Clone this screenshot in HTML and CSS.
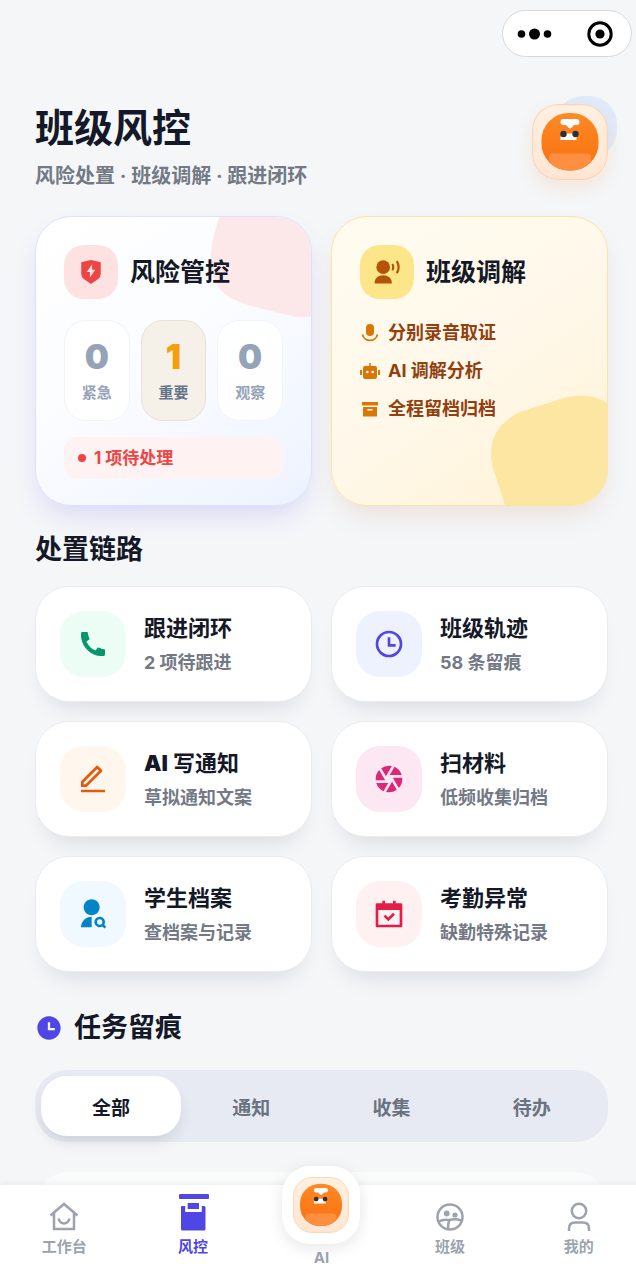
FILE: index.html
```html
<!DOCTYPE html>
<html lang="zh-CN">
<head>
  <meta charset="UTF-8">
  <meta name="viewport" content="width=device-width, initial-scale=1">
  <title>班级风控</title>
  <link rel="stylesheet" href="styles.css">
</head>
<body>
  <svg class="defs" aria-hidden="true">
    <defs>
      <linearGradient id="frame" x1="0" y1="0" x2="0" y2="1">
        <stop offset="0" stop-color="#fff0e2"/>
        <stop offset="1" stop-color="#ffe6d2"/>
      </linearGradient>
      <linearGradient id="ball" x1="0" y1="0" x2="0" y2="1">
        <stop offset="0" stop-color="#fd8a25"/>
        <stop offset="1" stop-color="#f97010"/>
      </linearGradient>
    </defs>
    <symbol id="mascot" viewBox="0 0 76 76">
      <rect x=".7" y=".7" width="74.6" height="74.6" rx="25" fill="url(#frame)" stroke="#fdd3b0" stroke-width="1.2"/>
      <rect x="9.5" y="9" width="57" height="57.5" rx="27" fill="url(#ball)"/>
      <path d="M17 53q0-3.500 5-3.500h32q5 0 5 3.500v4q-8 9.500-20 9.500h-2q-12 0-20-9.500z" fill="#ff8f40"/>
      <path d="M31.500 15h13a3 3 0 0 1 0 6h-2.500l-3 3.200h-2l-3-3.200h-2.500a3 3 0 0 1 0-6z" fill="#fff"/>
      <path d="M32 29.500h12.500v6.500h-16v-3z" fill="#fff"/>
      <circle cx="31.500" cy="30" r="3.200" fill="#2b303b"/>
      <circle cx="43.500" cy="30" r="3.200" fill="#2b303b"/>
    </symbol>
  </svg>

  <div class="app">
    <div class="capsule">
      <button class="capsule-btn" aria-label="更多">
        <svg width="36" height="14" viewBox="0 0 36 14"><circle cx="4.500" cy="7" r="3.800"/><circle cx="17.500" cy="7" r="5.500"/><circle cx="30.500" cy="7" r="3.800"/></svg>
      </button>
      <button class="capsule-btn" aria-label="关闭">
        <svg width="26" height="26" viewBox="0 0 26 26"><circle cx="13" cy="13" r="11.200" fill="none" stroke="#000" stroke-width="3"/><circle cx="13" cy="13" r="4.600"/></svg>
      </button>
    </div>

    <main class="content">
      <header class="header">
        <div>
          <h1>班级风控</h1>
          <p class="subtitle">风险处置 · 班级调解 · 跟进闭环</p>
        </div>
        <div class="avatar">
          <svg class="avatar-img"><use href="#mascot"/></svg>
        </div>
      </header>

      <section class="grid">
        <article class="card card-risk">
          <svg class="blob blob-top" width="101" height="101" viewBox="0 0 101 101"><path d="M9 0L3 22C-1 40-1 57 9 71C16 81 30 86 49 91L78 98Q94 102 101 99V0z" fill="#fde8e9"/></svg>
          <div class="card-head">
            <span class="badge badge-red">
              <svg class="icon-md" viewBox="0 0 24 24"><path d="M3.783 2.826L12 1l8.217 1.826a1 1 0 0 1 .783.976v9.987a6 6 0 0 1-2.672 4.992L12 23l-6.328-4.219A6 6 0 0 1 3 13.790V3.802a1 1 0 0 1 .783-.976zM13 10V5l-5 7h3v5l5-7h-3z"/></svg>
            </span>
            <h2>风险管控</h2>
          </div>
          <div class="stats">
            <div class="stat"><b>0</b><span>紧急</span></div>
            <div class="stat stat-on"><b>1</b><span>重要</span></div>
            <div class="stat"><b>0</b><span>观察</span></div>
          </div>
          <p class="alert">1 项待处理</p>
        </article>

        <article class="card card-talk">
          <svg class="blob blob-bottom" width="117" height="110" viewBox="0 0 117 110"><path d="M15 110L3 73C-3 50 4 30 30 17L77 2Q100-3 117 8V110z" fill="#fce6a2"/></svg>
          <div class="card-head">
            <span class="badge badge-yellow">
              <svg class="icon-md" viewBox="0 0 24 24"><circle cx="8.500" cy="7.500" r="6.300"/><path d="M.5 22.500c0-5 3.500-7.500 8-7.500s8 2.500 8 7.500z"/><path d="M17 4.500q1.500 3 0 6M21 2q3.500 5.500 0 11" fill="none" stroke="currentColor" stroke-width="2"/></svg>
            </span>
            <h2>班级调解</h2>
          </div>
          <ul class="points">
            <li><svg class="icon-sm" viewBox="0 0 20 20"><rect x="6" y="1" width="8" height="12" rx="4"/><path d="M2.500 11.500a7.700 7.700 0 0 0 15 0" fill="none" stroke="currentColor" stroke-width="1.800"/></svg>分别录音取证</li>
            <li><svg class="icon-sm" viewBox="0 0 20 20"><path d="M9.200 2h1.600v3H15a2 2 0 0 1 2 2v9a2 2 0 0 1-2 2H5a2 2 0 0 1-2-2V7a2 2 0 0 1 2-2h4.200zM0 9h2v5H0zM18 9h2v5h-2z"/><circle cx="7.300" cy="11" r="1.300" fill="#fff8e8"/><circle cx="12.700" cy="11" r="1.300" fill="#fff8e8"/></svg>AI 调解分析</li>
            <li><svg class="icon-sm" viewBox="0 0 20 20"><path d="M2 3h16v3.500H2zM3 8h14v9.500H3z"/><path d="M7.500 10h5v1.600h-5z" fill="#fff8e8"/></svg>全程留档归档</li>
          </ul>
        </article>
      </section>

      <h2 class="section-title">处置链路</h2>
      <nav class="grid">
        <a class="tile" href="#follow">
          <span class="tile-icon green"><svg viewBox="0 0 24 24"><path d="M21 16.420v3.536a1 1 0 0 1-.93.998c-.437.03-.794.046-1.070.046-8.837 0-16-7.163-16-16 0-.276.015-.633.046-1.070A1 1 0 0 1 4.044 3H7.580a.5.5 0 0 1 .498.450c.023.230.044.413.064.552A13.901 13.901 0 0 0 9.350 8.003c.095.2.033.439-.147.567l-2.158 1.542a13.047 13.047 0 0 0 6.844 6.844l1.540-2.154a.462.462 0 0 1 .573-.149 13.901 13.901 0 0 0 4 1.205c.139.02.322.042.550.064a.5.5 0 0 1 .449.498z"/></svg></span>
          <span class="tile-text"><strong>跟进闭环</strong><small>2 项待跟进</small></span>
        </a>
        <a class="tile" href="#track">
          <span class="tile-icon indigo"><svg viewBox="0 0 24 24"><circle cx="12" cy="12" r="9" fill="none" stroke="currentColor" stroke-width="2"/><path d="M13 12h4v2h-6V7h2z"/></svg></span>
          <span class="tile-text"><strong>班级轨迹</strong><small>58 条留痕</small></span>
        </a>
        <a class="tile" href="#notice">
          <span class="tile-icon orange"><svg viewBox="0 0 24 24"><path d="M6.414 16L16.556 5.858l-1.414-1.414L5 14.586V16h1.414zm.829 2H3v-4.243L14.435 2.322a1 1 0 0 1 1.414 0l2.829 2.829a1 1 0 0 1 0 1.414L7.243 18zM3 20h18v2H3v-2z"/></svg></span>
          <span class="tile-text"><strong><span class="heavy">AI</span> 写通知</strong><small>草拟通知文案</small></span>
        </a>
        <a class="tile" href="#scan">
          <span class="tile-icon pink"><svg viewBox="0 0 24 24"><path d="M9.827 21.763L14.310 14l3.532 6.117A9.955 9.955 0 0 1 12 22c-.746 0-1.473-.082-2.173-.237zM7.890 21.120A10.028 10.028 0 0 1 2.458 15h8.965L7.890 21.119zM2.050 13a9.964 9.964 0 0 1 2.583-7.761L9.112 13H2.050zm4.109-9.117A9.955 9.955 0 0 1 12 2c.746 0 1.473.082 2.173.237L9.690 10 6.159 3.883zM16.110 2.880A10.028 10.028 0 0 1 21.542 9h-8.965l3.533-6.119zM21.950 11a9.964 9.964 0 0 1-2.583 7.761L14.888 11h7.064z"/></svg></span>
          <span class="tile-text"><strong>扫材料</strong><small>低频收集归档</small></span>
        </a>
        <a class="tile" href="#student">
          <span class="tile-icon blue"><svg viewBox="0 0 24 24"><path d="M11 14v8H3a8 8 0 0 1 8-8zm0-1c-3.315 0-6-2.685-6-6s2.685-6 6-6 6 2.685 6 6-2.685 6-6 6zm9.446 7.032l1.504 1.503-1.415 1.415-1.503-1.504a4 4 0 1 1 1.414-1.414zM17 20a2 2 0 1 0 0-4 2 2 0 0 0 0 4z"/></svg></span>
          <span class="tile-text"><strong>学生档案</strong><small>查档案与记录</small></span>
        </a>
        <a class="tile" href="#attendance">
          <span class="tile-icon rose"><svg viewBox="0 0 24 24"><path d="M9 2v2h6V2h2v2h4a1 1 0 0 1 1 1v16a1 1 0 0 1-1 1H3a1 1 0 0 1-1-1V5a1 1 0 0 1 1-1h4V2h2zm11 7H4v11h16V9zm-4.964 2.136l1.414 1.414L11.500 17.500l-3.536-3.536 1.415-1.414 2.120 2.122z"/></svg></span>
          <span class="tile-text"><strong>考勤异常</strong><small>缺勤特殊记录</small></span>
        </a>
      </nav>

      <h2 class="section-title section-tasks">
        <svg class="icon-title" viewBox="0 0 24 24"><path d="M12 22C6.477 22 2 17.523 2 12S6.477 2 12 2s10 4.477 10 10-4.477 10-10 10zm1-10V7h-2v7h6v-2h-4z"/></svg>
        任务留痕
      </h2>
      <div class="tabs" role="tablist">
        <button class="tab tab-on" role="tab" aria-selected="true">全部</button>
        <button class="tab" role="tab">通知</button>
        <button class="tab" role="tab">收集</button>
        <button class="tab" role="tab">待办</button>
      </div>
      <div class="task"></div>
    </main>

    <nav class="tabbar">
      <a class="nav-item" href="#home">
        <svg viewBox="0 0 32 32"><path d="M2.500 14.500L16 3l13.500 11.500M6 12.500V28h20V12.500M10.500 17.500q1.500 5 5.500 5t5.500-5"/></svg>
        <span>工作台</span>
      </a>
      <a class="nav-item nav-on" href="#risk">
        <svg viewBox="0 0 32 32"><rect x="2" y="-7" width="30" height="5" rx="1"/><path d="M5 5h3.200v6h16.600V5H27a1.500 1.500 0 0 1 1.500 1.500V28a1.500 1.500 0 0 1-1.500 1.500H5.500A1.500 1.500 0 0 1 4 28V6a1 1 0 0 1 1-1z"/><path d="M10.700 2h11.300v6H10.700z"/></svg>
        <span>风控</span>
      </a>
      <a class="nav-item nav-ai" href="#ai">
        <span class="bubble"><svg><use href="#mascot"/></svg></span>
        <span>AI</span>
      </a>
      <a class="nav-item" href="#class">
        <svg viewBox="0 0 32 32"><circle cx="16" cy="16" r="12.500"/><circle cx="12.700" cy="12.500" r="2.900" class="dot"/><circle cx="21" cy="14" r="2.600" class="dot"/><path d="M4.500 20.500q5-2.500 10.500-1.500 7-1.500 12 .5M15.500 19q-1.500 3-1.500 9"/></svg>
        <span>班级</span>
      </a>
      <a class="nav-item" href="#me">
        <svg viewBox="0 0 32 32"><circle cx="16" cy="10" r="7.200"/><path d="M6 30v-2.500q0-6 6-6h8q6 0 6 6V30"/></svg>
        <span>我的</span>
      </a>
    </nav>
  </div>
</body>
</html>
```

FILE: styles.css
```css
* {
  box-sizing: border-box;
}
body {
  margin: 0;
  font-family: Inter, "Noto Sans CJK SC", sans-serif;
  font-weight: 700;
  color: #141827;
  background: #f4f6f8;
}
h1, h2, p, ul {
  margin: 0;
  padding: 0;
}
a {
  color: inherit;
  text-decoration: none;
}
button {
  border: 0;
  padding: 0;
  background: none;
  font: inherit;
  color: inherit;
}
svg {
  display: block;
  fill: currentColor;
}
.defs {
  position: absolute;
  width: 0;
  height: 0;
}
.app {
  height: 100vh;
  display: flex;
  flex-direction: column;
  overflow: hidden;
}
.content {
  flex: 1;
  min-height: 0;
  overflow-y: auto;
  scrollbar-width: none;
  padding: 104px 28px 0 35px;
}

/* top right capsule, floats over the page */
.capsule {
  position: fixed;
  z-index: 5;
  top: 10px;
  right: 4px;
  width: 130px;
  height: 47px;
  padding: 0 18px 0 14px;
  display: flex;
  justify-content: space-between;
  border: 1px solid #d6d8da;
  border-radius: 24px;
  background: #fff;
  color: #000;
}
.capsule-btn {
  display: flex;
  align-items: center;
}

/* header */
.header {
  display: flex;
  justify-content: space-between;
  margin-bottom: 26px;
}
h1 {
  font-size: 39px;
  line-height: 48px;
}
.subtitle {
  margin-top: 10px;
  font-size: 20px;
  line-height: 28px;
  color: #737985;
}
.avatar {
  position: relative;
  width: 76px;
  height: 76px;
}
.avatar::before {
  content: "";
  position: absolute;
  top: -8px;
  right: -9px;
  width: 62px;
  height: 62px;
  border-radius: 28px;
  background: #e0eafa;
}
.avatar-img {
  position: relative;
  width: 76px;
  height: 76px;
  border-radius: 26px;
  box-shadow: 0 8px 18px rgba(249, 115, 22, 0.12);
}

/* cards */
.grid {
  display: grid;
  grid-template-columns: 1fr 1fr;
  gap: 19px;
}
.card {
  position: relative;
  overflow: hidden;
  padding: 28px 28px 26px;
  border-radius: 36px;
}
.card-risk {
  border: 1px solid #dfe0fd;
  background: linear-gradient(145deg, #fff 0%, #fbfcff 45%, #edf3ff 100%);
  box-shadow: 0 14px 28px -8px rgba(99, 91, 240, 0.22);
}
.card-talk {
  border: 1px solid #fde3a6;
  background: linear-gradient(145deg, #fffcef 0%, #fff8ea 50%, #fff3d6 100%);
  box-shadow: 0 14px 28px -8px rgba(190, 110, 60, 0.18);
}
.blob {
  position: absolute;
}
.blob-top {
  top: 0;
  right: 0;
}
.blob-bottom {
  right: 0;
  bottom: 0;
}
.card-head {
  position: relative;
  display: flex;
  align-items: center;
  gap: 12px;
  margin-bottom: 21px;
}
.card-head h2 {
  font-size: 25px;
  line-height: 36px;
}
.badge {
  width: 54px;
  height: 54px;
  border-radius: 20px;
  display: flex;
  align-items: center;
  justify-content: center;
}
.badge-red {
  color: #ef4444;
  background: #fee2e2;
}
.badge-yellow {
  color: #b45309;
  background: #fde68a;
}
.icon-md {
  width: 26px;
  height: 26px;
}
.icon-sm {
  width: 20px;
  height: 20px;
  color: #d97706;
}
.stats {
  position: relative;
  display: grid;
  grid-template-columns: repeat(3, 1fr);
  gap: 11px;
}
.stat {
  height: 101px;
  padding-top: 16px;
  border: 1px solid #f1f3f8;
  border-radius: 22px;
  background: rgba(255, 255, 255, 0.85);
  text-align: center;
  color: #94a3b8;
}
.stat b {
  display: block;
  font-size: 34px;
  line-height: 40px;
  font-weight: 900;
}
.stat span {
  display: block;
  margin-top: 5px;
  font-size: 15px;
  line-height: 22px;
}
.stat-on {
  border-color: #e9e1d4;
  background: #f6f1e8;
  color: #64748b;
}
.stat-on b {
  color: #f59e0b;
}
.alert {
  display: flex;
  align-items: center;
  gap: 8px;
  margin-top: 16px;
  padding: 8px 14px;
  border-radius: 14px;
  background: #fef2f2;
  color: #ef4444;
  font-size: 17px;
  line-height: 26px;
}
.alert::before {
  content: "";
  width: 8px;
  height: 8px;
  border-radius: 50%;
  background: #ef4444;
}
.points {
  position: relative;
  display: grid;
  gap: 12px;
  list-style: none;
  font-size: 18px;
  line-height: 26px;
  color: #92400e;
}
.points li {
  display: flex;
  align-items: center;
  gap: 8px;
}

/* entry tiles */
.section-title {
  margin: 26px 0 18px;
  font-size: 27px;
  line-height: 36px;
}
.tile {
  display: flex;
  align-items: center;
  gap: 18px;
  padding: 24px;
  border: 1px solid #e9ebee;
  border-radius: 34px;
  background: #fff;
  box-shadow: 0 16px 24px -12px rgba(15, 23, 42, 0.12);
}
.tile-icon {
  flex: none;
  width: 66px;
  height: 66px;
  border-radius: 24px;
  display: flex;
  align-items: center;
  justify-content: center;
}
.tile-icon svg {
  width: 32px;
  height: 32px;
}
.tile-text strong {
  display: block;
  font-size: 22px;
  line-height: 34px;
  font-weight: 700;
}
.tile-text small {
  display: block;
  margin-top: 4px;
  font-size: 18px;
  line-height: 28px;
  color: #737985;
}
.tile-text .heavy {
  font-weight: 900;
}
.green { color: #059669; background: #ecfdf5; }
.indigo { color: #4f46e5; background: #eef2ff; }
.orange { color: #ea580c; background: #fff7ed; }
.pink { color: #db2777; background: #fce7f3; }
.blue { color: #0284c7; background: #f0f9ff; }
.rose { color: #e11d48; background: #fff1f2; }

/* tasks */
.section-tasks {
  display: flex;
  align-items: center;
  gap: 11px;
  margin: 38px 0 24px;
}
.icon-title {
  width: 28px;
  height: 28px;
  color: #4f46e5;
}
.tabs {
  display: flex;
  padding: 6px;
  border-radius: 32px;
  background: #e7eaf2;
}
.tab {
  flex: 1;
  height: 60px;
  border-radius: 26px;
  font-size: 19px;
  color: #6b7280;
}
.tab-on {
  background: #fff;
  color: #141827;
  box-shadow: 0 8px 16px -4px rgba(15, 23, 42, 0.14);
}
.task {
  height: 160px;
  margin-top: 30px;
  border-radius: 34px;
  background: #fafbfb;
}

/* bottom bar */
.tabbar {
  position: relative;
  width: calc(100% + 7px);
  height: 101px;
  display: grid;
  grid-template-columns: repeat(5, 1fr);
  background: #fff;
  box-shadow: 0 -2px 6px rgba(15, 23, 42, 0.05);
}
.nav-item {
  display: flex;
  flex-direction: column;
  align-items: center;
  padding-top: 16px;
  font-size: 15px;
  line-height: 22px;
  color: #9ca3af;
}
.nav-item > svg {
  width: 32px;
  height: 32px;
  margin-bottom: 3px;
  overflow: visible;
  fill: none;
  stroke: currentColor;
  stroke-width: 2.5;
}
.nav-item .dot {
  fill: currentColor;
  stroke: none;
}
.nav-on {
  color: #4f46e5;
}
.nav-on > svg {
  fill: currentColor;
  stroke: none;
}
.nav-ai {
  padding-top: 0;
}
.bubble {
  width: 78px;
  height: 78px;
  margin-top: -19px;
  margin-bottom: 3px;
  padding: 11px;
  border-radius: 28px;
  background: #fff;
  box-shadow: 0 4px 16px rgba(15, 23, 42, 0.1);
}
.bubble svg {
  width: 56px;
  height: 56px;
}
```
